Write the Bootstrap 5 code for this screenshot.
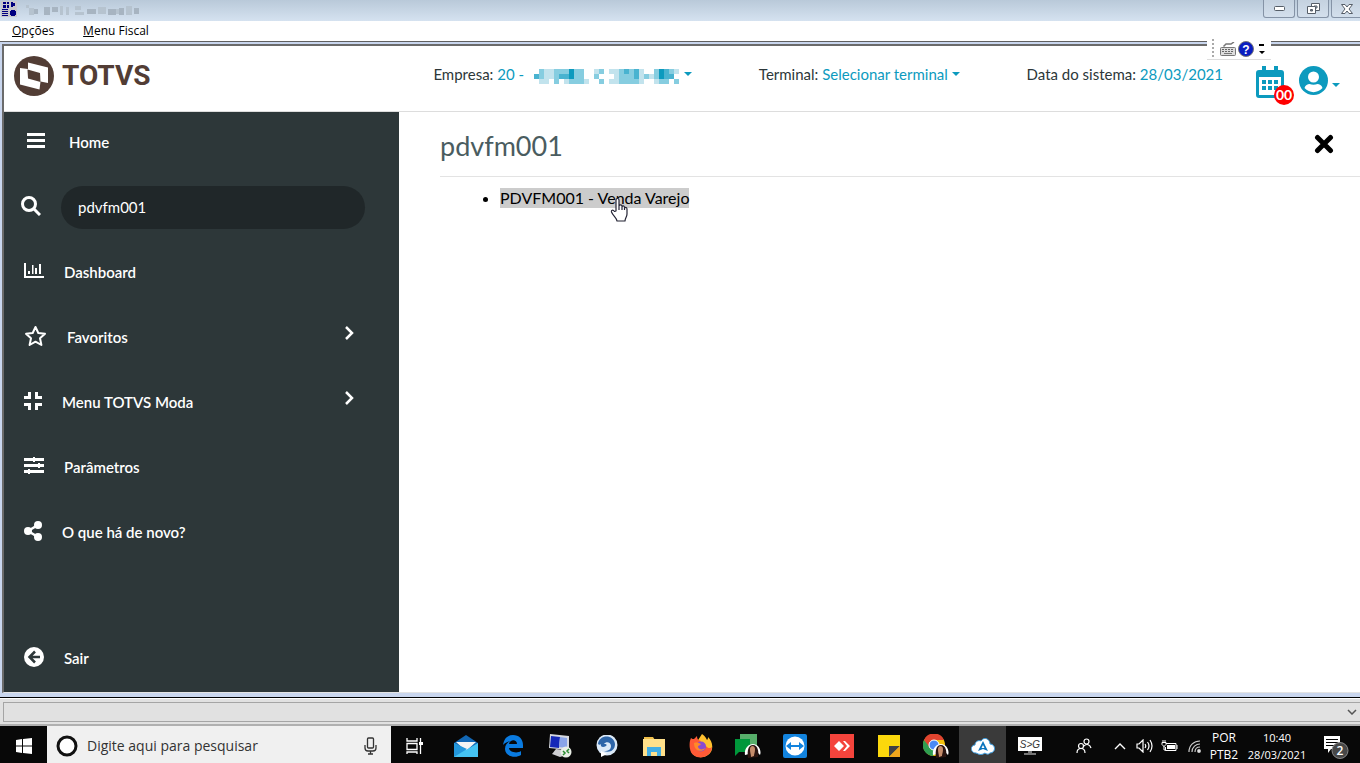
<!DOCTYPE html>
<html lang="pt-BR">
<head>
<meta charset="utf-8">
<meta name="viewport" content="width=device-width, initial-scale=1">
<title>TOTVS Moda</title>
<link href="https://cdn.jsdelivr.net/npm/bootstrap@5.3.0/dist/css/bootstrap.min.css" rel="stylesheet">
<style>
  :root { --app-font: Lato, "Open Sans", sans-serif; --win-font: "Open Sans", "Noto Sans", sans-serif; --teal: #0c9abe; --side: #2d3739; }
  body { font-family: var(--app-font); font-size: 15px; line-height: 24px; color: #2c3739; background: #fff; overflow: hidden; }
  button { border: 0; background: none; padding: 0; color: inherit; }
  svg { display: block; flex: none; }
  a { text-decoration: none; }
  .win-title { height: 21px; background: linear-gradient(#b9c9d9, #d5e2f0); }
  .win-controls { gap: 2px; margin-right: -3px; }
  .win-btn { width: 32px; height: 18px; border: 1px solid #8593a6; border-top: 0; border-radius: 0 0 3px 3px; background: linear-gradient(#c5d2e0, #d3dfec); display: flex; align-items: center; justify-content: center; }
  .win-menu { height: 20px; padding-left: 12px; gap: 29px; font: 12px/20px var(--win-font); }
  .win-menu a { color: #000; }
  .frame { border-top: 1px solid #606060; padding-top: 2px; padding-bottom: 4px; background: #c9d6ee; }
  .frame-body { margin-left: 2px; border-left: 2px solid #6b6b6b; border-top: 2px solid #6b6b6b; border-bottom: 1px solid #e3e3e3; background: #fff; }
  .float-bar { top: -4px; right: 89px; width: 64px; height: 22px; background: #fff; border-bottom: 1px solid #ddd; z-index: 3; padding: 0 6px 0 5px; gap: 2px; }
  .app-head { height: 66px; padding: 10px 20px 0 10px; border-bottom: 1px solid #ddd; }
  .logo-text { font: bold 28px/40px Roboto, sans-serif; color: #523d35; }
  .head-link { color: var(--teal); }
  .head-items { gap: 67px; padding-top: 6px; }
  .masked { margin-left: 6px; }
  .tri { display: inline-block; border: 4px solid transparent; border-top-color: var(--teal); border-bottom: 0; vertical-align: 4px; }
  .count-badge { right: -10px; bottom: -7px; width: 20px; height: 20px; border-radius: 50%; background: #f00; color: #fff; font-size: 14px; line-height: 20px; text-align: center; font-weight: bold; }
  .side { width: 395px; background: var(--side); padding: 0 34px 4px 20px; gap: 5px; font-weight: 600; }
  .side-row { height: 60px; gap: 20px; color: #fff; }
  .side-row svg { margin-bottom: 3px; }
  .side-search { height: 43px; border: 0; border-radius: 22px; background: #202729; color: #fff; padding: 0 17px; font-size: 15px; }
  .side-search:focus { background: #202729; color: #fff; }
  .page { padding: 14px 0 0 41px; }
  .page-top { height: 51px; padding-right: 26px; border-bottom: 1px solid #e3e3e3; }
  .page-title { font-size: 27px; line-height: 40px; color: #4a5c60; font-weight: 400; }
  .results { padding-left: 60px; margin: 9px 0 0; color: #000; font-size: 16px; }
  .results a { color: #000; background: #ccc; line-height: 20px; display: inline-block; }
  .hand { left: 110px; top: 9px; }
  .status { height: 28px; background: #e1e1e1; border-top: 1px solid #fff; border-bottom: 2px solid #b0b0b0; padding: 3px 0 2px 3px; }
  .status-line { border: 1px solid #a5a5a5; border-right: 0; padding-right: 3px; }
  .dark-line { border-top: 1px solid #000; }
  .taskbar { height: 37px; background: #080808; color: #fff; font-family: var(--win-font); }
  .tb { width: 47px; display: flex; align-items: center; justify-content: center; padding-top: 3px; }
  .tb-sm { width: 25px; }
  .tb-active { background: #3a3a3a; }
  .tb-find { width: 344px; background: #f0f0f0; padding: 3px 14px 0 9px; gap: 9px; color: #222; }
  .tb-find input { border: 0; background: none; font-size: 14px; padding: 0; color: #333; outline: 0; }
  .tb-find input::placeholder { color: #333; opacity: 1; }
  .tray-text { font-size: 12px; line-height: 17px; text-align: center; padding-top: 2px; }
  .tray-clock { font-size: 11px; }
</style>
</head>
<body class="d-flex flex-column min-vh-100">

<header class="win-title d-flex">
  <svg class="mt-1" width="150" height="17" viewBox="0 0 150 17" shape-rendering="crispEdges" overflow="visible">
    <rect x="1" y="-3" width="16" height="16" fill="#c8c8cc"/>
    <path fill="#000080" d="M3-2h3v2h-3zM7-2h2v2h-2zM3 1h3v3h-3zM7 1h2v3h-2zM11-2h2v5h-2zM13-1h2v3h-2zM2 5h6v1h-6zM2 7h6v1h-6zM2 9h6v1h-6zM2 11h6v1h-6zM11 6h4v6h-4zM10 7h6v4h-6z"/>
    <path fill="#a7b4c1" d="M34 5h4v5h-4zM44 3h6v8h-6zM52 3h6v5h-6zM87 5h9v5h-9zM108 5h8v6h-8zM119 4h5v7h-5zM134 4h5v6h-5z"/>
    <path fill="#b6c3cf" d="M26 1h3v3h-3zM29 4h5v7h-5zM60 2h3v9h-3zM66 3h3v8h-3zM75 2h6v4h-6zM75 8h9v3h-9zM98 3h8v7h-8zM116 5h3v5h-3zM126 2h6v9h-6z"/>
  </svg>
  <div class="win-controls d-flex ms-auto">
    <button class="win-btn" aria-label="Minimizar"><svg width="11" height="5" viewBox="0 0 11 5"><rect x=".5" y=".5" width="10" height="4" rx="1" fill="#fff" stroke="#565e68"/></svg></button>
    <button class="win-btn" aria-label="Restaurar"><svg width="13" height="12" viewBox="0 0 13 12"><path fill="#fff" fill-rule="evenodd" stroke="#565e68" d="M4.500.5h8v7h-8zM7 3h3v2h-3z"/><path fill="#fff" fill-rule="evenodd" stroke="#565e68" d="M.5 3.500h8v7h-8zM3.500 6.500h2v1.500h-2z"/></svg></button>
    <button class="win-btn" aria-label="Fechar"><svg width="12" height="10" viewBox="0 0 12 10"><path fill="#fff" stroke="#565e68" d="M.5.500h3.500l2 2.500 2-2.500h3.500l-3.500 4.500 3.500 4.500h-3.500l-2-2.500-2 2.500h-3.500l3.500-4.500z"/></svg></button>
  </div>
</header>

<nav class="win-menu d-flex">
  <a href="#"><u>O</u>pções</a>
  <a href="#"><u>M</u>enu Fiscal</a>
</nav>

<div class="frame flex-grow-1 d-flex flex-column position-relative">
  <div class="float-bar position-absolute d-flex align-items-center">
    <svg width="2" height="19" viewBox="0 0 2 19"><path stroke="#aaa" stroke-width="2" stroke-dasharray="2 2" d="M1 0v19"/></svg>
    <svg class="ms-1" width="16" height="14" viewBox="0 0 16 14" fill="none" stroke="#777"><path stroke-width="1.500" d="M3.500 4.500 6 2h5l3-2"/><rect x=".5" y="5.500" width="15" height="8" fill="#ddd" rx="1"/><path stroke="#666" stroke-dasharray="2 1" d="M2 7.500h12M2 9.500h12"/><path d="M4 11.500h8"/></svg>
    <svg width="16" height="16" viewBox="0 0 16 16"><circle cx="8" cy="8" r="7.500" fill="#0a1ec0" stroke="#777"/><text x="8" y="12.500" text-anchor="middle" font-family="Liberation Sans" font-size="12" font-weight="bold" fill="#fff">?</text></svg>
    <svg class="ms-auto" width="6" height="12" viewBox="0 0 6 12"><path d="M0 1h5v2H0zM0 8h6l-3 3z"/></svg>
  </div>

  <div class="frame-body flex-grow-1 d-flex flex-column">
    <header class="app-head d-flex align-items-start">
      <a href="#" class="d-flex me-auto gap-2">
        <svg width="40" height="40" viewBox="0 0 40 40"><circle cx="20" cy="20" r="20" fill="#523d35"/><path fill="#fff" d="M14 6.500 34 11.500V27l-7.500-1.500-1 8L6 28.500V12l8 1z"/><path fill="#523d35" d="M13.500 13.500 26 17l.5 9-12.500-3.500z"/></svg>
        <span class="logo-text">TOTVS</span>
      </a>
      <div class="head-items d-flex">
        <div>Empresa: <a href="#" class="head-link">20 -
          <svg class="masked d-inline-block" width="150" height="15" viewBox="0 0 150 15" shape-rendering="crispEdges" role="img" aria-label="Empresa">
            <path fill="#c2e3ed" d="M10 0h10v5H10zM10 5h5v5h-5zM15 5h5v5h-5zM5 10h10v5H5zM30 10h5v5h-5zM50 10h5v5h-5zM60 0h5v5h-5zM75 0h10v5H75zM80 5h5v10h-5zM75 10h5v5h-5zM105 0h5v15h-5zM115 5h5v5h-5zM120 10h5v5h-5zM140 0h5v5h-5z"/>
            <path fill="#86cde0" d="M5 0h5v10H5zM20 0h15v5H20zM20 5h5v10h-5zM40 0h10v15H40zM35 10h5v5h-5zM65 0h5v5h-5zM60 5h5v5h-5zM65 10h5v5h-5zM85 0h5v15h-5zM90 5h5v10h-5zM95 0h5v15h-5zM100 10h5v5h-5zM110 5h5v5h-5zM120 0h5v10h-5zM125 10h10v5h-10zM135 0h5v5h-5zM140 10h5v5h-5z"/>
            <path fill="#49b3d0" d="M0 5h5v5H0zM25 5h10v5H25zM90 0h5v5h-5zM100 0h5v10h-5zM130 0h5v10h-5zM135 5h5v5h-5z"/>
            <path fill="#0c9abe" d="M35 0h5v10h-5zM125 0h5v10h-5z"/>
          </svg><span class="tri"></span></a></div>
        <div>Terminal: <a href="#" class="head-link">Selecionar terminal <span class="tri"></span></a></div>
        <div>Data do sistema: <a href="#" class="head-link">28/03/2021</a></div>
      </div>
      <a href="#" class="position-relative" style="margin:10px 15px 0 33px" aria-label="Calendário">
        <svg width="28" height="32" viewBox="0 0 28 32" fill="#0c9abe"><path fill-rule="evenodd" d="M6 0h4v4h8V0h4v4h3a3 3 0 0 1 3 3v22a3 3 0 0 1-3 3H3a3 3 0 0 1-3-3V7a3 3 0 0 1 3-3h3zM3 11v18h22V11z"/><path d="M6 14h4v4H6zM12 14h4v4h-4zM18 14h4v4h-4zM6 20h4v4H6zM12 20h4v4h-4zM18 20h4v4h-4z"/></svg>
        <span class="count-badge position-absolute">00</span>
      </a>
      <a href="#" class="d-flex align-items-center gap-1" style="margin-top:10px" aria-label="Usuário">
        <svg width="29" height="29" viewBox="0 0 29 29"><circle cx="14.500" cy="14.500" r="14.500" fill="#0c9abe"/><circle cx="14.500" cy="11" r="5.500" fill="#fff"/><path fill="#fff" d="M5.500 22c1-3 3-4 5-4 2.500 1 5.500 1 8 0 2 0 4 1 5 4-5 5.500-13 5.500-18 0z"/></svg>
        <span class="tri mt-2"></span>
      </a>
    </header>

    <div class="d-flex flex-grow-1">
      <nav class="side d-flex flex-column flex-shrink-0">
        <a href="#" class="side-row d-flex align-items-center" style="gap:24px;padding-left:3px"><svg width="18" height="15" viewBox="0 0 18 15"><path fill="#fff" d="M0 0h18v3H0zM0 6h18v3H0zM0 12h18v3H0z"/></svg>Home</a>
        <div class="side-row d-flex align-items-center" style="margin-left:-3px">
          <label for="menu-search" aria-label="Pesquisar"><svg width="20" height="20" viewBox="0 0 20 20" fill="none" stroke="#fff" stroke-width="3"><circle cx="8" cy="8" r="6.500"/><path d="m12.500 12.500 6.500 6.500"/></svg></label>
          <input id="menu-search" type="text" class="side-search form-control shadow-none" value="pdvfm001">
        </div>
        <a href="#" class="side-row d-flex align-items-center"><svg width="20" height="16" viewBox="0 0 20 16"><path fill="#fff" d="M0 0h2v13h18v2H0zM4 8h2v3H4zM8 2h1.500v9H8zM11 5h2v6h-2zM15 1h2v10h-2z"/></svg>Dashboard</a>
        <a href="#" class="side-row d-flex align-items-center"><svg width="23" height="22" viewBox="0 0 23 22"><path fill="none" stroke="#fff" stroke-width="2" stroke-linejoin="round" d="m11.500 2 2.800 6 6.700.8-5 4.500 1.400 6.700-5.900-3.300L5.600 20 7 13.300 2 8.800 8.700 8z"/></svg>Favoritos
          <svg class="ms-auto me-2 mb-2" width="16" height="14" viewBox="0 0 16 14"><path fill="none" stroke="#fff" stroke-width="2.500" d="m5 1 6 6-6 6"/></svg></a>
        <a href="#" class="side-row d-flex align-items-center"><svg width="18" height="18" viewBox="0 0 18 18"><path fill="none" stroke="#fff" stroke-width="3" d="M0 5.500h5.500V0M18 5.500h-5.500V0M0 12.500h5.500V18M18 12.500h-5.500V18"/></svg>Menu TOTVS Moda
          <svg class="ms-auto me-2 mb-2" width="16" height="14" viewBox="0 0 16 14"><path fill="none" stroke="#fff" stroke-width="2.500" d="m5 1 6 6-6 6"/></svg></a>
        <a href="#" class="side-row d-flex align-items-center"><svg width="20" height="17" viewBox="0 0 20 17"><path fill="#fff" d="M0 1h20v3H0zM0 7h20v3H0zM0 13h20v3H0zM9 0h2v5H9zM14 6h2v5h-2zM4 12h2v5H4z"/></svg>Parâmetros</a>
        <a href="#" class="side-row d-flex align-items-center"><svg width="18" height="20" viewBox="0 0 18 20" fill="#fff"><path fill="none" stroke="#fff" stroke-width="2.500" d="M14 4 4 10l10 6"/><circle cx="14" cy="4" r="4"/><circle cx="4" cy="10" r="4"/><circle cx="14" cy="16" r="4"/></svg>O que há de novo?</a>
        <a href="#" class="side-row d-flex align-items-center mt-auto"><svg width="20" height="20" viewBox="0 0 20 20"><circle cx="10" cy="10" r="10" fill="#fff"/><path fill="none" stroke="#2d3739" stroke-width="2.500" d="M11 4.500 5.500 10l5.500 5.500M6 10h10"/></svg>Sair</a>
      </nav>

      <main class="page flex-grow-1">
        <div class="page-top d-flex justify-content-between">
          <h1 class="page-title mb-0">pdvfm001</h1>
          <button aria-label="Fechar busca" class="align-self-start mt-2"><svg width="20" height="20" viewBox="0 0 20 20"><path stroke="#000" stroke-width="5" stroke-linecap="round" d="m3.500 3.500 13 13M16.500 3.500l-13 13"/></svg></button>
        </div>
        <ul class="results">
          <li><a href="#" class="position-relative">PDVFM001 - Venda Varejo
            <svg class="hand position-absolute" width="19" height="25" viewBox="0 0 19 25"><path fill="#fff" stroke="#223" stroke-width="1.200" stroke-linejoin="round" d="M6 14V3c0-2 3-2 3 0v6c0-1.500 3-1.500 3 0v1c0-1.500 2.500-1.500 2.500.5v1c0-1.500 2.500-1.500 2.500.5V17c0 3-2 4-2 7H7c0-3-4-5-5.500-9-.5-2 1.500-2.500 3-.5zM9 9v4M12 10v3M14.500 11v2"/></svg></a></li>
        </ul>
      </main>
    </div>
  </div>
</div>

<div class="dark-line"></div>
<div class="status d-flex"><div class="status-line flex-grow-1 d-flex align-items-center justify-content-end">
  <svg width="10" height="6" viewBox="0 0 10 6"><path fill="none" stroke="#555" stroke-width="1.500" d="m1 1 4 4 4-4"/></svg></div></div>

<footer class="taskbar d-flex">
  <button class="tb" aria-label="Iniciar"><svg width="16" height="16" viewBox="0 0 16 16"><path fill="#fff" d="M0 2l6-1v6.500H0zM7 1l9-1v7.500H7zM0 8.500h6V15l-6-1zM7 8.500h9V16l-9-1z"/></svg></button>
  <div class="tb-find d-flex align-items-center">
    <svg width="22" height="22" viewBox="0 0 22 22"><circle cx="11" cy="11" r="9" fill="#fff" stroke="#111" stroke-width="3"/></svg>
    <input type="text" class="flex-grow-1" placeholder="Digite aqui para pesquisar" aria-label="Digite aqui para pesquisar">
    <svg width="13" height="18" viewBox="0 0 13 18" fill="none" stroke="#333" stroke-width="1.300"><rect x="3.500" y="1" width="6" height="10" rx="1"/><path d="M1 8v3q0 3 3 3h5q3 0 3-3V8M6.500 14v3M4 17h5"/></svg>
  </div>
  <button class="tb me-1" aria-label="Visão de tarefas"><svg width="17" height="16" viewBox="0 0 17 16" fill="none" stroke="#fff" stroke-width="1.300"><path d="M1 0v3h10V0M1 5.500h10v6H1zM1 16v-2h10v2M14.500 0v16"/><path fill="#fff" stroke="none" d="M13 4h4v3h-4z"/></svg></button>
  <button class="tb" aria-label="Email"><svg width="24" height="22" viewBox="0 0 24 22"><path fill="#1267b4" d="M0 8 12 0l12 8v14H0z"/><path fill="#f4f4f4" d="M2 7h20l-10 9z"/><path fill="#45c3f2" d="m0 8 12 7 12-7v14H0z"/><path fill="#2397dc" d="m0 22 13-8L0 8z"/></svg></button>
  <button class="tb" aria-label="Edge"><svg width="21" height="22" viewBox="0 0 21 22"><path fill="#0a7be0" d="M1 10C2 3 6 0 11 0c6 0 10 4 10 10v3H7c0 4 8 6 12 3v4c-6 4-16 1-16-6 0-4 2-6 5-8-4 1-6 3-7 4zm6-1h8c0-5-7-5-8 0z"/></svg></button>
  <button class="tb" aria-label="Terminal remoto"><svg width="24" height="24" viewBox="0 0 24 24"><path fill="#d5d8df" d="m2 0 19 2v14L1 14z"/><path fill="#1428b8" d="m3 2 9 1-1 11-9-1z"/><path fill="#8aa4e8" d="m12 3 7 1v10l-8-1z"/><path fill="#cfcfd2" d="m8 15 8 1 2 5-6 2-8-3z"/><circle cx="18" cy="18" r="5.500" fill="#e9eee6"/><path stroke="#2a8a30" stroke-width="1.500" fill="none" d="m15 17 2 2-2 2M21 15l-2 2 2 2"/></svg></button>
  <button class="tb" aria-label="Mensagens"><svg width="22" height="22" viewBox="0 0 22 22"><circle cx="11" cy="10" r="10.500" fill="#dbe9f7"/><path fill="#2d65a8" d="M2 9C3-1 18-1 19 9c0 7-6 9-11 7 5 0 7-2 7-5 0-4-5-5-7-2 3 0 3 1 2 2-3 2-6 1-5-2-1 1-2 1-3 0z"/><path fill="#fff" d="m5 16 0 6 6-3z"/></svg></button>
  <button class="tb" aria-label="Explorador de arquivos"><svg width="22" height="19" viewBox="0 0 22 19"><path fill="#f0bf4a" d="M1 0h9l2 3H1z"/><path fill="#ffe08a" d="M0 2h22v17H0z"/><path fill="#43aee4" d="M4 10h14v9h-4v-4H8v4H4z"/></svg></button>
  <button class="tb" aria-label="Firefox"><svg width="24" height="24" viewBox="0 0 24 24"><path fill="#ffc02e" d="M13 0c3 2 4 4 5 6 1-1 1-2 1-3 3 3 5 7 4 12-2 10-18 11-21 2z"/><path fill="#ff5a36" d="M2 4c1 1 2 1 3 1l3-3c0 3 1 4 4 5-3 3 2 4 5 5 2 3 5 2 6 1-1 13-20 14-22 2C0 10 1 6 2 4z"/><circle cx="12" cy="12.500" r="5" fill="#8a4bd0"/><path fill="#ff8a28" d="M5 9c3-1 5 0 7 1-1 2-3 1-3 3 1 3 5 3 7 1-1 4-11 5-11-5z"/></svg></button>
  <button class="tb" aria-label="Chat"><svg width="26" height="24" viewBox="0 0 26 24"><path fill="#57ae6a" d="M5 0h17v17l-4-3H5z"/><path fill="#00973b" d="M0 5h15v13H4l-4 4z"/><path fill="#fff" d="M10 21c-1-6 3-11 8-11s9 6 7 11l-3-3z"/><path fill="#2a1410" d="M13 24c-1-7 0-13 5-13s6 7 5 12z"/><path fill="#c68d6b" d="M15 15c0-4 5-4 5 0s-1 5-1 7l-3 1c0-3-1-4-1-8z"/></svg></button>
  <button class="tb" aria-label="TeamViewer"><svg width="24" height="24" viewBox="0 0 24 24"><rect width="24" height="24" rx="2" fill="#1283de"/><circle cx="12" cy="12" r="9.500" fill="#fff"/><path fill="#1283de" d="m3 12 5-4v3h8V8l5 4-5 4v-3H8v3z"/></svg></button>
  <button class="tb" aria-label="AnyDesk"><svg width="24" height="24" viewBox="0 0 24 24"><rect width="24" height="24" fill="#f4443c"/><path fill="#fff" d="m9 7 5 5-5 5-5-5zM13 7h2l5 5-5 5h-2l4-5z"/></svg></button>
  <button class="tb" aria-label="Notas"><svg width="22" height="22" viewBox="0 0 22 22"><rect width="22" height="22" fill="#fbd80c"/><path fill="#3f4044" d="M11 11h11L11 22z"/><path fill="#efa51c" d="M22 11v11H11z"/></svg></button>
  <button class="tb" aria-label="Chrome"><svg width="26" height="24" viewBox="0 0 26 24"><circle cx="11" cy="11" r="11" fill="#f4c20d"/><path fill="#e1442f" d="M1 6a11 11 0 0 1 20 0H11L6 14z"/><path fill="#2f9e51" d="M1 6A11 11 0 0 0 10 22l4-7H8z"/><circle cx="11" cy="11" r="5" fill="#4a8af4" stroke="#fff"/><path fill="#fff" d="M10 21c-1-6 3-11 8-11s9 6 7 11l-3-3z"/><path fill="#2a1410" d="M13 24c-1-7 0-13 5-13s6 7 5 12z"/><path fill="#c68d6b" d="M15 15c0-4 5-4 5 0s-1 5-1 7l-3 1c0-3-1-4-1-8z"/></svg></button>
  <button class="tb tb-active" aria-label="Nuvem TOTVS"><svg width="24" height="18" viewBox="0 0 24 18"><path fill="#fff" stroke="#3b9de0" d="M5 16C-1 16-1 8 4 8c0-4 4-5 6-4 3-5 9-2 9 3 6 0 6 9 0 9-2 2-4 1-5 0-3 2-5 2-9 0z"/><path fill="#0b74bd" fill-rule="evenodd" d="m12 4 5 10-5-2-5 2zM12 8l-1.500 3h3z"/></svg></button>
  <button class="tb" aria-label="Monitor"><svg width="24" height="18" viewBox="0 0 24 18"><rect width="24" height="14" fill="#fff"/><path fill="#777" d="M10 14h4v2h4v2H6v-2h4z"/><text x="12" y="11" text-anchor="middle" font-family="Liberation Sans" font-size="10" font-style="italic" fill="#333">S&gt;G</text></svg></button>

  <button class="tb ms-auto" aria-label="Pessoas"><svg width="16" height="16" viewBox="0 0 16 16" fill="none" stroke="#fff" stroke-width="1.200"><circle cx="5" cy="8" r="2.500"/><path d="M1 15c0-6 8-6 8 0"/><circle cx="10.500" cy="3.500" r="2.500"/><path d="M8 8c3-3 6-1 7 2"/></svg></button>
  <button class="tb tb-sm" aria-label="Mostrar ícones ocultos"><svg width="12" height="8" viewBox="0 0 12 8"><path fill="none" stroke="#fff" stroke-width="1.400" d="m1 7 5-5 5 5"/></svg></button>
  <button class="tb tb-sm" aria-label="Volume"><svg width="17" height="14" viewBox="0 0 17 14" fill="none" stroke="#fff" stroke-width="1.200"><path d="M1 5h2l4-4v12L3 9H1zM9 5q1.500 2 0 4M11.500 3q3 4 0 8M14 1q4 6 0 12"/></svg></button>
  <button class="tb tb-sm" aria-label="Bateria"><svg width="17" height="12" viewBox="0 0 17 12"><path fill="none" stroke="#fff" d="M5 3.500h10v7H4.500V7M1 2.500h4v2L3 6.500l-2-2zM2 0v2M4 0v2M3 6v4h2M16 5v4"/><path fill="#fff" d="M6 5h8v4H6z"/></svg></button>
  <button class="tb tb-sm" aria-label="Rede"><svg width="13" height="13" viewBox="0 0 13 13" fill="none" stroke="#ccc" stroke-width="1.200"><path d="M1 12C1 5 6 1 12 1M4 12c0-5 4-8 8-8M7 12c0-3 2-5 5-5"/><circle cx="11" cy="11" r="1.300" fill="#fff"/></svg></button>
  <button class="tray-text" style="width:34px">POR<br>PTB2</button>
  <button class="tray-text tray-clock" style="width:72px">10:40<br>28/03/2021</button>
  <button class="tb" aria-label="Notificações"><svg width="30" height="26" viewBox="0 0 30 26"><path fill="#fff" d="M2 3h16v13H9l-3 4v-4H2z"/><path stroke="#000" d="M4 6.500h12M4 9.500h12M4 12.500h8"/><circle cx="18" cy="17.500" r="8" fill="#484848" stroke="#888"/><text x="18" y="22" text-anchor="middle" font-family="Open Sans" font-size="12" font-weight="600" fill="#fff">2</text></svg></button>
</footer>

<script src="https://cdn.jsdelivr.net/npm/bootstrap@5.3.0/dist/js/bootstrap.bundle.min.js"></script>
</body>
</html>
